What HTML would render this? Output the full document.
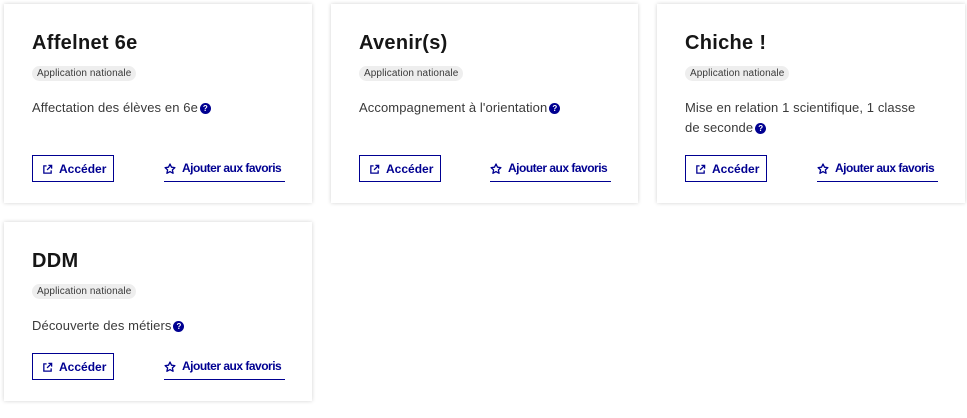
<!DOCTYPE html>
<html><head><meta charset="utf-8"><style>
*{box-sizing:border-box;margin:0;padding:0}
body{width:967px;height:418px;background:#fff;font-family:"Liberation Sans",sans-serif;position:relative;overflow:hidden}
.card{position:absolute;background:#fff;box-shadow:0 0 4px rgba(0,0,0,.18);}
.t{position:absolute;left:28px;font-size:20px;font-weight:bold;color:#161616;letter-spacing:.3px}
.b{position:absolute;left:28px;height:15px;padding:0 5px;background:#eee;border-radius:8px;font-size:10px;line-height:15px;color:#3a3a3a;letter-spacing:.1px}
.d{position:absolute;left:28px;width:240px;font-size:13px;line-height:20px;color:#3a3a3a;letter-spacing:.1px}
.q{display:inline-block;width:11px;height:11px;border-radius:50%;background:#000091;color:#fff;font-size:8px;font-weight:bold;line-height:11px;text-align:center;vertical-align:1px;margin-left:2px}
.btn{position:absolute;left:28px;width:82px;height:27px;border:1px solid #000091;color:#000091;font-size:12px;font-weight:bold;line-height:26px;padding-left:26px;white-space:nowrap}
.btn svg{position:absolute;left:9px;top:8px}
.fav{position:absolute;left:160px;width:121px;height:27px;border-bottom:1.5px solid #000091;color:#000091;font-size:12px;font-weight:bold;line-height:27px;padding-left:18px;white-space:nowrap;letter-spacing:-.5px}
.fav svg{position:absolute;left:0;top:8px}
</style></head><body>
<svg width="0" height="0" style="position:absolute"><defs>
<symbol id="ext" viewBox="0 0 12 12"><path d="M5 2H2v8h8V7M7 1.5h3.5V5M10.5 1.5L5.5 6.5" fill="none" stroke="#000091" stroke-width="1.4"/></symbol>
<symbol id="star" viewBox="0 0 12 12"><path d="M6 1l1.5 3.2 3.4.4-2.5 2.3.7 3.4L6 8.6 2.9 10.3l.7-3.4L1.1 4.6l3.4-.4z" fill="none" stroke="#000091" stroke-width="1.3" stroke-linejoin="round"/></symbol>
</defs></svg>

<div class="card" style="left:4px;top:4px;width:308px;height:199px">
<div class="t" style="top:28px">Affelnet 6e</div>
<div class="b" style="top:62px">Application nationale</div>
<div class="d" style="top:94px">Affectation des élèves en 6e<span class="q">?</span></div>
<div class="btn" style="top:151px"><svg width="11" height="11"><use href="#ext"/></svg>Accéder</div>
<div class="fav" style="top:151px"><svg width="12" height="12"><use href="#star"/></svg>Ajouter aux favoris</div>
</div>

<div class="card" style="left:331px;top:4px;width:307px;height:199px">
<div class="t" style="top:28px">Avenir(s)</div>
<div class="b" style="top:62px">Application nationale</div>
<div class="d" style="top:94px">Accompagnement à l'orientation<span class="q">?</span></div>
<div class="btn" style="top:151px"><svg width="11" height="11"><use href="#ext"/></svg>Accéder</div>
<div class="fav" style="top:151px;left:159px"><svg width="12" height="12"><use href="#star"/></svg>Ajouter aux favoris</div>
</div>

<div class="card" style="left:657px;top:4px;width:308px;height:199px">
<div class="t" style="top:28px">Chiche !</div>
<div class="b" style="top:62px">Application nationale</div>
<div class="d" style="top:94px">Mise en relation 1 scientifique, 1 classe de seconde<span class="q">?</span></div>
<div class="btn" style="top:151px"><svg width="11" height="11"><use href="#ext"/></svg>Accéder</div>
<div class="fav" style="top:151px"><svg width="12" height="12"><use href="#star"/></svg>Ajouter aux favoris</div>
</div>

<div class="card" style="left:4px;top:222px;width:308px;height:179px">
<div class="t" style="top:28px">DDM</div>
<div class="b" style="top:62px">Application nationale</div>
<div class="d" style="top:94px">Découverte des métiers<span class="q">?</span></div>
<div class="btn" style="top:131px"><svg width="11" height="11"><use href="#ext"/></svg>Accéder</div>
<div class="fav" style="top:131px"><svg width="12" height="12"><use href="#star"/></svg>Ajouter aux favoris</div>
</div>
</body></html>
